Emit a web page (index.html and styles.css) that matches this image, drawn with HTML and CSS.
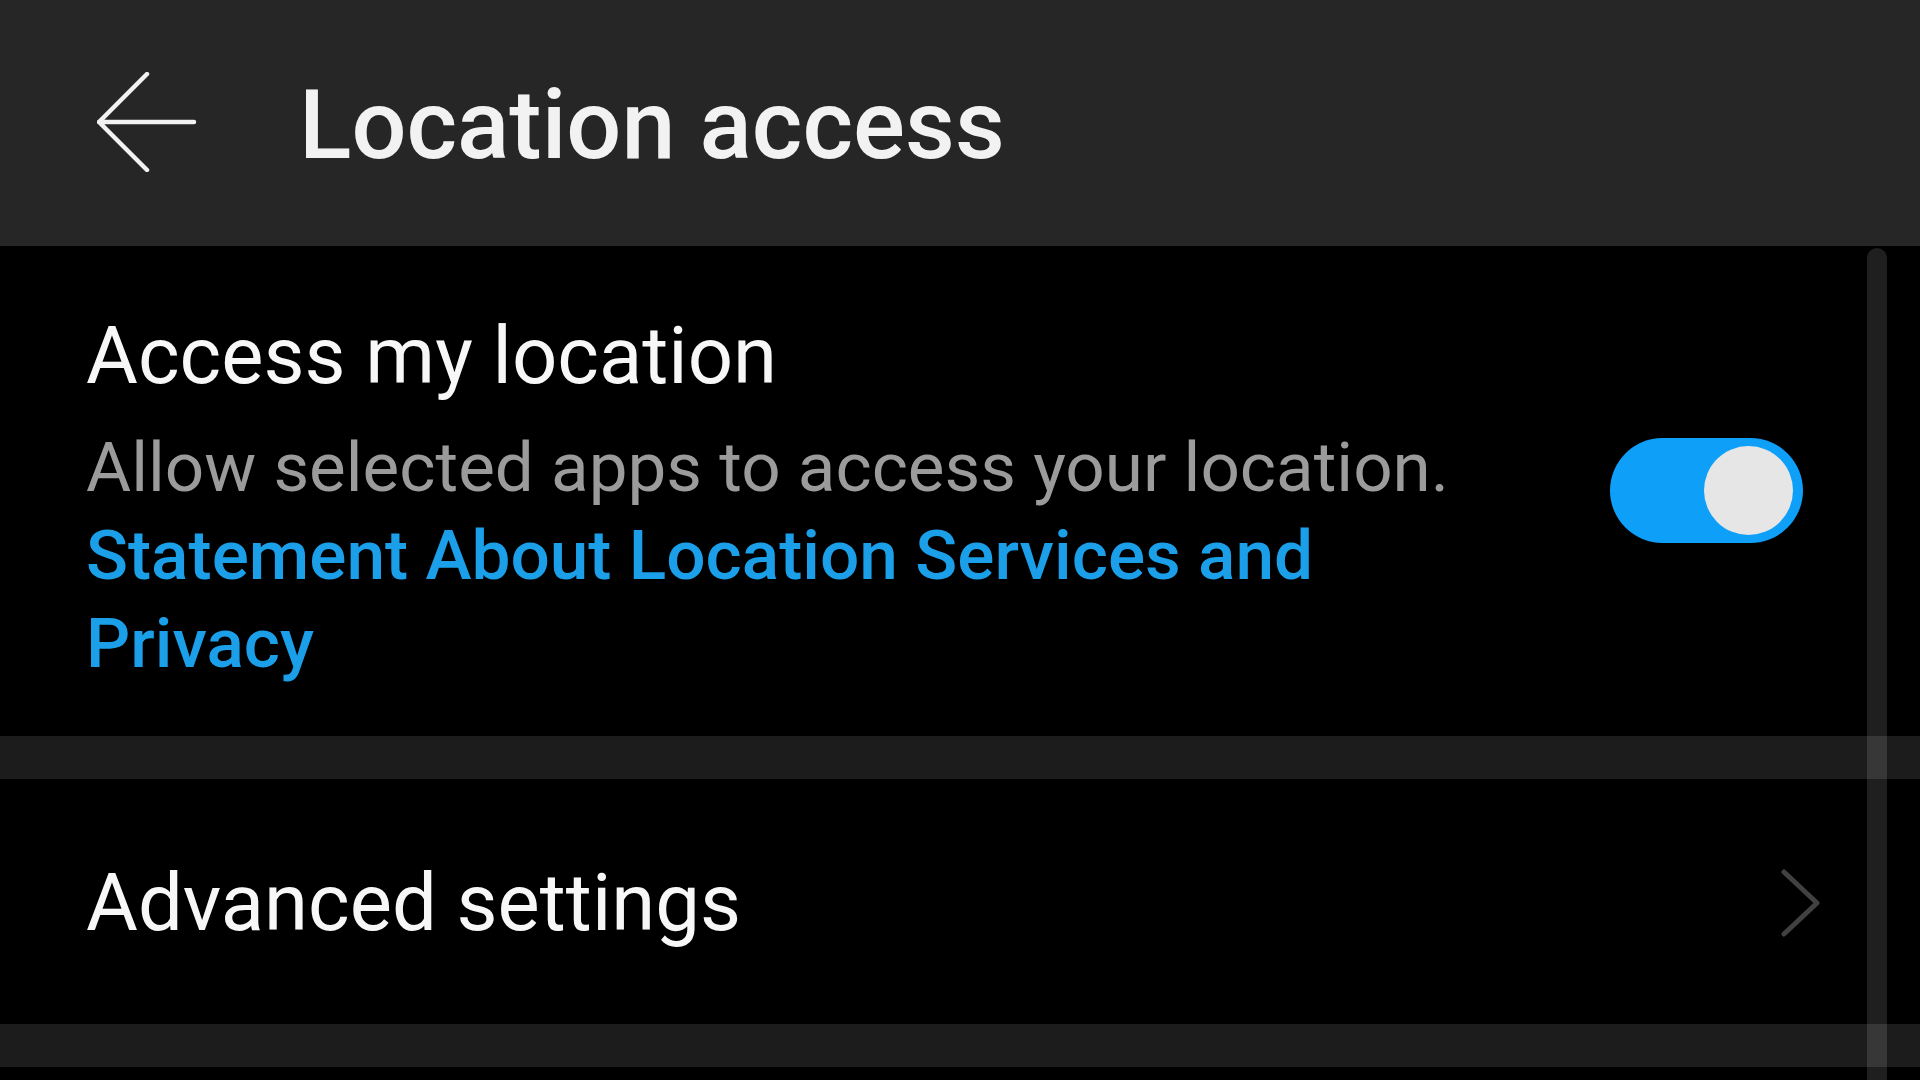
FILE: index.html
```html
<!DOCTYPE html>
<html lang="en">
<head>
<meta charset="utf-8">
<title>Location access</title>
<link rel="stylesheet" href="styles.css">
</head>
<body>
<div class="screen">
  <header class="appbar">
    <svg class="back" width="100" height="100" viewBox="0 0 100 100" aria-hidden="true">
      <path d="M50 2 L2 50 L50 98 M2 50 L97 50" fill="none" stroke="#f2f2f2" stroke-width="4.5" stroke-linecap="round" stroke-linejoin="round"/>
    </svg>
    <h1 class="title">Location access</h1>
  </header>
  <main class="content">
    <section class="item item-toggle">
      <div class="item-text">
        <div class="item-title">Access my location</div>
        <div class="item-sub">Allow selected apps to access your location.</div>
        <div class="item-link">Statement About Location Services and<br>Privacy</div>
      </div>
      <div class="switch"><div class="knob"></div></div>
    </section>
    <div class="band"></div>
    <section class="item item-nav">
      <div class="item-title">Advanced settings</div>
      <svg class="chevron" width="40" height="68" viewBox="0 0 40 68" aria-hidden="true">
        <path d="M3 3 L36 34 L3 65" fill="none" stroke="#414141" stroke-width="5" stroke-linecap="round" stroke-linejoin="round"/>
      </svg>
    </section>
    <div class="band"></div>
    <div class="rest"></div>
    <div class="scrollbar"></div>
  </main>
</div>
</body>
</html>
```
FILE: styles.css
```css
* { box-sizing: border-box; }
html, body {
  margin: 0;
  padding: 0;
  background: #000;
}
body {
  width: 1920px;
  height: 1080px;
  overflow: hidden;
  font-family: Roboto, "Noto Sans", "Liberation Sans", sans-serif;
}
.screen {
  display: flex;
  flex-direction: column;
  height: 1080px;
}
.appbar {
  height: 246px;
  background: #262626;
  display: flex;
  align-items: center;
  padding-left: 97px;
  flex: none;
}
.back {
  display: block;
  width: 100px;
  height: 100px;
  margin-top: -2px;
}
.title {
  margin: 4px 0 0 102px;
  font-size: 97px;
  font-weight: 500;
  color: #f2f2f2;
  letter-spacing: 0;
  line-height: 1;
}
.content {
  position: relative;
  flex: 1;
  display: flex;
  flex-direction: column;
  background: #000;
}
.item {
  display: flex;
  align-items: center;
  justify-content: space-between;
  background: #000;
}
.item-toggle {
  height: 490px;
  padding: 62px 117px 48px 86px;
}
.item-text {
  display: flex;
  flex-direction: column;
}
.item-title {
  font-size: 79.6px;
  line-height: 96px;
  color: #f7f7f7;
}
.item-sub {
  margin-top: 20px;
  font-size: 69.2px;
  line-height: 88px;
  color: #9b9b9b;
}
.item-link {
  font-size: 69.4px;
  line-height: 88px;
  font-weight: 500;
  color: #1a9fe8;
}
.switch {
  width: 193px;
  height: 105px;
  border-radius: 53px;
  background: #0ea0f9;
  position: relative;
  flex: none;
  margin-top: -16px;
}
.knob {
  position: absolute;
  right: 10px;
  top: 8px;
  width: 89px;
  height: 89px;
  border-radius: 50%;
  background: #e6e6e6;
}
.band {
  height: 43px;
  background: #1c1c1c;
  flex: none;
}
.item-nav {
  height: 245px;
  padding: 2px 99px 0 86px;
}
.chevron {
  display: block;
}
.rest {
  flex: 1;
  background: #000;
}
.scrollbar {
  position: absolute;
  left: 1867px;
  top: 2px;
  width: 20px;
  bottom: -20px;
  border-radius: 10px;
  background: rgba(255, 255, 255, 0.12);
}
```
